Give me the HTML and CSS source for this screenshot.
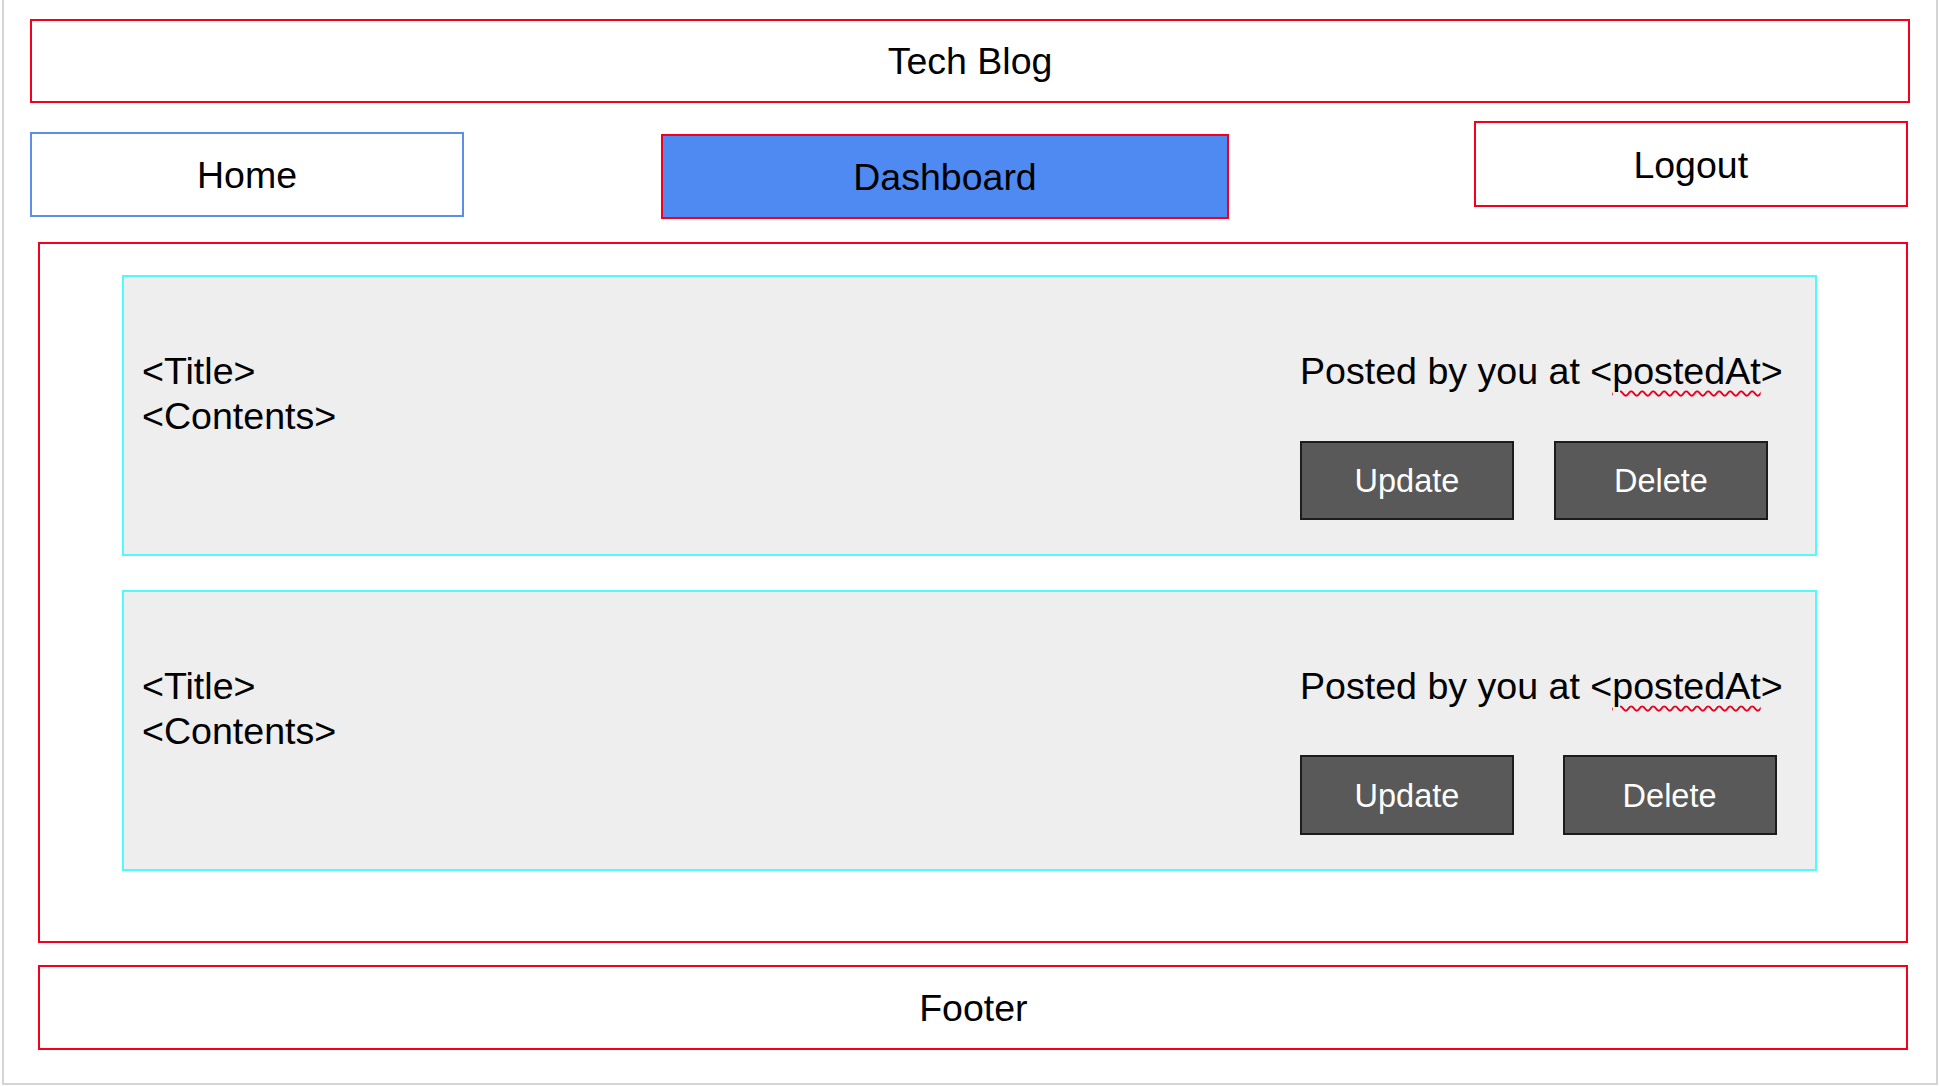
FILE: index.html
```html
<!DOCTYPE html>
<html lang="en">
<head>
<meta charset="utf-8">
<title>Tech Blog - Dashboard</title>
<link rel="stylesheet" href="styles.css">
</head>
<body>
<div class="frame">
  <header class="site-header">Tech Blog</header>
  <nav class="nav">
    <a class="nav-item nav-home">Home</a>
    <a class="nav-item nav-dashboard">Dashboard</a>
    <a class="nav-item nav-logout">Logout</a>
  </nav>
  <main class="main">
    <section class="card">
      <div class="card-body">
        <div class="line">&lt;Title&gt;</div>
        <div class="line">&lt;Contents&gt;</div>
      </div>
      <div class="card-side">
        <div class="line posted">Posted by you at &lt;<span class="spell">postedAt</span>&gt;</div>
        <div class="actions">
          <button class="btn btn-update">Update</button>
          <button class="btn btn-delete">Delete</button>
        </div>
      </div>
    </section>
    <section class="card">
      <div class="card-body">
        <div class="line">&lt;Title&gt;</div>
        <div class="line">&lt;Contents&gt;</div>
      </div>
      <div class="card-side">
        <div class="line posted">Posted by you at &lt;<span class="spell">postedAt</span>&gt;</div>
        <div class="actions actions-wide">
          <button class="btn btn-update">Update</button>
          <button class="btn btn-delete">Delete</button>
        </div>
      </div>
    </section>
  </main>
  <footer class="site-footer">Footer</footer>
</div>
</body>
</html>
```

FILE: styles.css
```css
* { box-sizing: border-box; }

html, body {
  margin: 0;
  padding: 0;
  background: #ffffff;
  overflow: hidden;
}

body {
  font-family: "Liberation Sans", Arial, sans-serif;
  color: #000000;
}

.frame {
  margin-left: 2px;
  width: 1936px;
  height: 1085px;
  border: 2px solid #d4d4d4;
  border-top: none;
  display: flex;
  flex-direction: column;
}

.site-header {
  margin: 18.5px 0 0 26px;
  width: 1880px;
  height: 84px;
  border: 2px solid #f4001e;
  display: flex;
  align-items: center;
  justify-content: center;
  padding-top: 2px;
  font-size: 37.5px;
}

.nav {
  margin: 18.5px 0 0 26px;
  width: 1878px;
  height: 98px;
  display: flex;
  align-items: flex-start;
}

.nav-item {
  display: flex;
  align-items: center;
  justify-content: center;
  padding-top: 3px;
  font-size: 37.5px;
  color: #000000;
  text-decoration: none;
}

.nav-home {
  margin-top: 11px;
  width: 434px;
  height: 84.5px;
  border: 2px solid #5b8eea;
}

.nav-dashboard {
  margin-top: 12.6px;
  margin-left: 197px;
  width: 568px;
  height: 85.4px;
  background: #4f89f2;
  border: 2px solid #f4001e;
}

.nav-logout {
  margin-left: auto;
  width: 434.5px;
  height: 85.6px;
  border: 2px solid #f4001e;
}

.main {
  margin: 22.5px 0 0 34.4px;
  width: 1870px;
  height: 701px;
  border: 2px solid #f4001e;
  padding: 31.2px 0 0 82.1px;
  display: flex;
  flex-direction: column;
  gap: 34.3px;
}

.card {
  width: 1695px;
  height: 281px;
  background: #eeeeee;
  border: 2px solid #52fbfb;
  padding: 72.5px 25.5px 0 17.5px;
  display: flex;
  justify-content: space-between;
  align-items: flex-start;
}

.line {
  font-size: 37.6px;
  line-height: 44.5px;
  white-space: nowrap;
}

.card-side {
  width: 490px;
  display: flex;
  flex-direction: column;
}

.spell {
  text-decoration: underline wavy #e8001f;
  text-decoration-thickness: 1.5px;
  text-underline-offset: 6px;
}

.actions {
  margin-top: 47.5px;
  display: flex;
  gap: 40px;
}

.actions-wide {
  gap: 48.6px;
}

.actions-wide .btn {
  margin-top: -1px;
}

.btn {
  width: 214px;
  height: 79.3px;
  background: #595959;
  border: 2px solid #1c1c1c;
  color: #ffffff;
  font-family: "Liberation Sans", Arial, sans-serif;
  font-size: 32.5px;
  padding: 2px 0 0 0;
  display: flex;
  align-items: center;
  justify-content: center;
}

.site-footer {
  margin: 22.3px 0 0 34.4px;
  width: 1870px;
  height: 85px;
  border: 2px solid #f4001e;
  display: flex;
  align-items: center;
  justify-content: center;
  padding-top: 2px;
  font-size: 37.5px;
}
```
